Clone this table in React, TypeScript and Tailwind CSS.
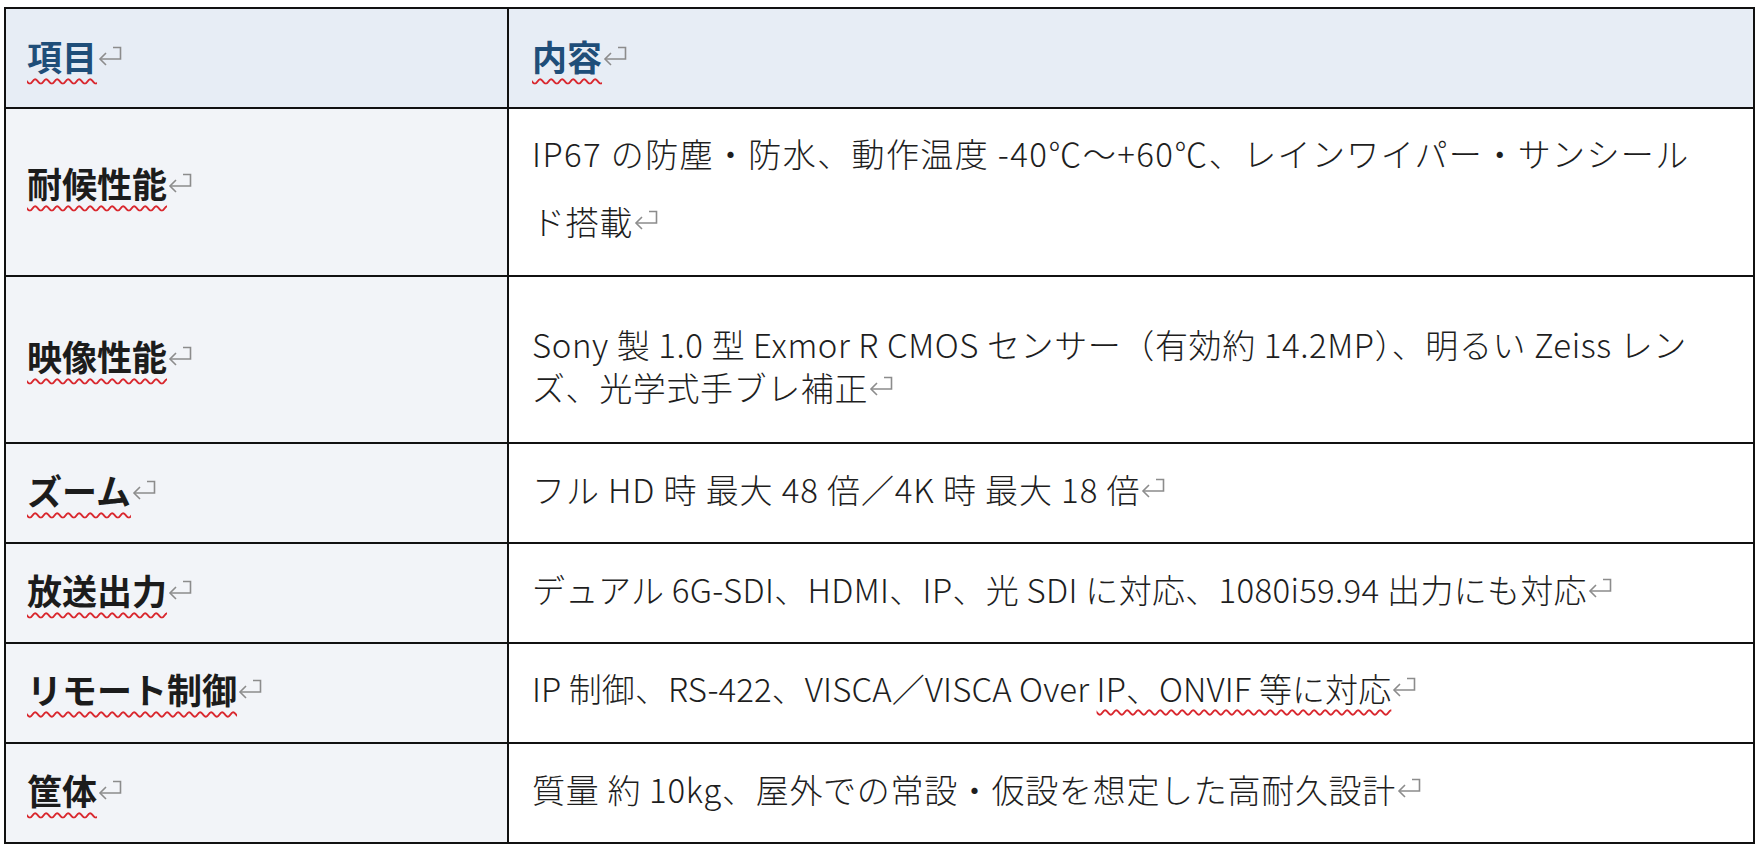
import React from "react";

const Mark = () => (
  <svg
    width="24"
    height="20"
    viewBox="0 0 24 20"
    className="inline-block align-[5px] ml-[1px]"
    fill="none"
    stroke="#8c8c8c"
    strokeWidth="1.6"
  >
    <path d="M15 1.5 H22.5 V13 H2" />
    <path d="M8 7 L2 13 L8 19" />
  </svg>
);

const Wavy = ({ children }: { children: React.ReactNode }) => (
  <span className="underline decoration-wavy decoration-[#d9272e] decoration-[length:1.5px] underline-offset-[7px]">
    {children}
  </span>
);

type Row = {
  label: string;
  h: string;
  labelCls: string;
  contentCls: string;
  content: React.ReactNode;
};

const rows: Row[] = [
  {
    label: "耐候性能",
    h: "h-[168px]",
    labelCls: "items-center pb-[20px]",
    contentCls: "justify-start pt-[10px] leading-[68px] tracking-[0.6px]",
    content: (
      <>
        <div className="tracking-[1.4px]">IP67 の防塵・防水、動作温度 -40℃～+60℃、レインワイパー・サンシール</div>
        <div>
          ド搭載
          <Mark />
        </div>
      </>
    ),
  },
  {
    label: "映像性能",
    h: "h-[167px]",
    labelCls: "items-center pb-[9px]",
    contentCls: "justify-start pt-[46px] leading-[43px] tracking-[0.6px]",
    content: (
      <>
        <div>Sony 製 1.0 型 Exmor R CMOS センサー（有効約 14.2MP）、明るい Zeiss レン</div>
        <div>
          ズ、光学式手ブレ補正
          <Mark />
        </div>
      </>
    ),
  },
  {
    label: "ズーム",
    h: "h-[100px]",
    labelCls: "items-center pb-[8px]",
    contentCls: "justify-center pb-[8px] leading-none tracking-[0.9px]",
    content: (
      <div>
        フル HD 時 最大 48 倍／4K 時 最大 18 倍
        <Mark />
      </div>
    ),
  },
  {
    label: "放送出力",
    h: "h-[100px]",
    labelCls: "items-center pb-[8px]",
    contentCls: "justify-center pb-[8px] leading-none tracking-[0.3px]",
    content: (
      <div>
        デュアル 6G-SDI、HDMI、IP、光 SDI に対応、1080i59.94 出力にも対応
        <Mark />
      </div>
    ),
  },
  {
    label: "リモート制御",
    h: "h-[100px]",
    labelCls: "items-center pb-[9px]",
    contentCls: "justify-center pb-[9px] leading-none tracking-[0.1px]",
    content: (
      <div>
        IP 制御、RS-422、VISCA／VISCA Over <Wavy>IP、ONVIF 等に対応</Wavy>
        <Mark />
      </div>
    ),
  },
  {
    label: "筐体",
    h: "h-[98px]",
    labelCls: "items-center pb-[8px]",
    contentCls: "justify-center pb-[8px] leading-none tracking-[0.7px]",
    content: (
      <div>
        質量 約 10kg、屋外での常設・仮設を想定した高耐久設計
        <Mark />
      </div>
    ),
  },
];

export default function App() {
  return (
    <div className="w-[1760px] h-[850px] bg-white overflow-hidden font-['Noto_Sans_CJK_JP','Noto_Sans',sans-serif]">
      <div className="ml-[4px] mt-[7px] w-[1751px] border-2 border-[#111]">
        {/* header */}
        <div className="flex h-[100px] border-b-2 border-[#111] bg-[#e7edf5]">
          <div className="w-[503px] border-r-2 border-[#111] flex items-center pl-[21px] pb-[6px] text-[35px] font-bold text-[#1f4e79] leading-none">
            <span>
              <Wavy>項目</Wavy>
              <Mark />
            </span>
          </div>
          <div className="flex-1 flex items-center pl-[23px] pb-[6px] text-[35px] font-bold text-[#1f4e79] leading-none">
            <span>
              <Wavy>内容</Wavy>
              <Mark />
            </span>
          </div>
        </div>
        {rows.map((r, i) => (
          <div
            key={r.label}
            className={`flex ${r.h} ${i < rows.length - 1 ? "border-b-2 border-[#111]" : ""}`}
          >
            <div
              className={`w-[503px] shrink-0 border-r-2 border-[#111] bg-[#f2f4f8] flex pl-[21px] text-[35px] font-bold text-[#1c1c1c] leading-none ${r.labelCls}`}
            >
              <span>
                <Wavy>{r.label}</Wavy>
                <Mark />
              </span>
            </div>
            <div
              className={`flex-1 bg-white flex flex-col items-start pl-[23px] text-[33px] font-light text-[#1e1e1e] whitespace-nowrap ${r.contentCls}`}
            >
              {r.content}
            </div>
          </div>
        ))}
      </div>
    </div>
  );
}
